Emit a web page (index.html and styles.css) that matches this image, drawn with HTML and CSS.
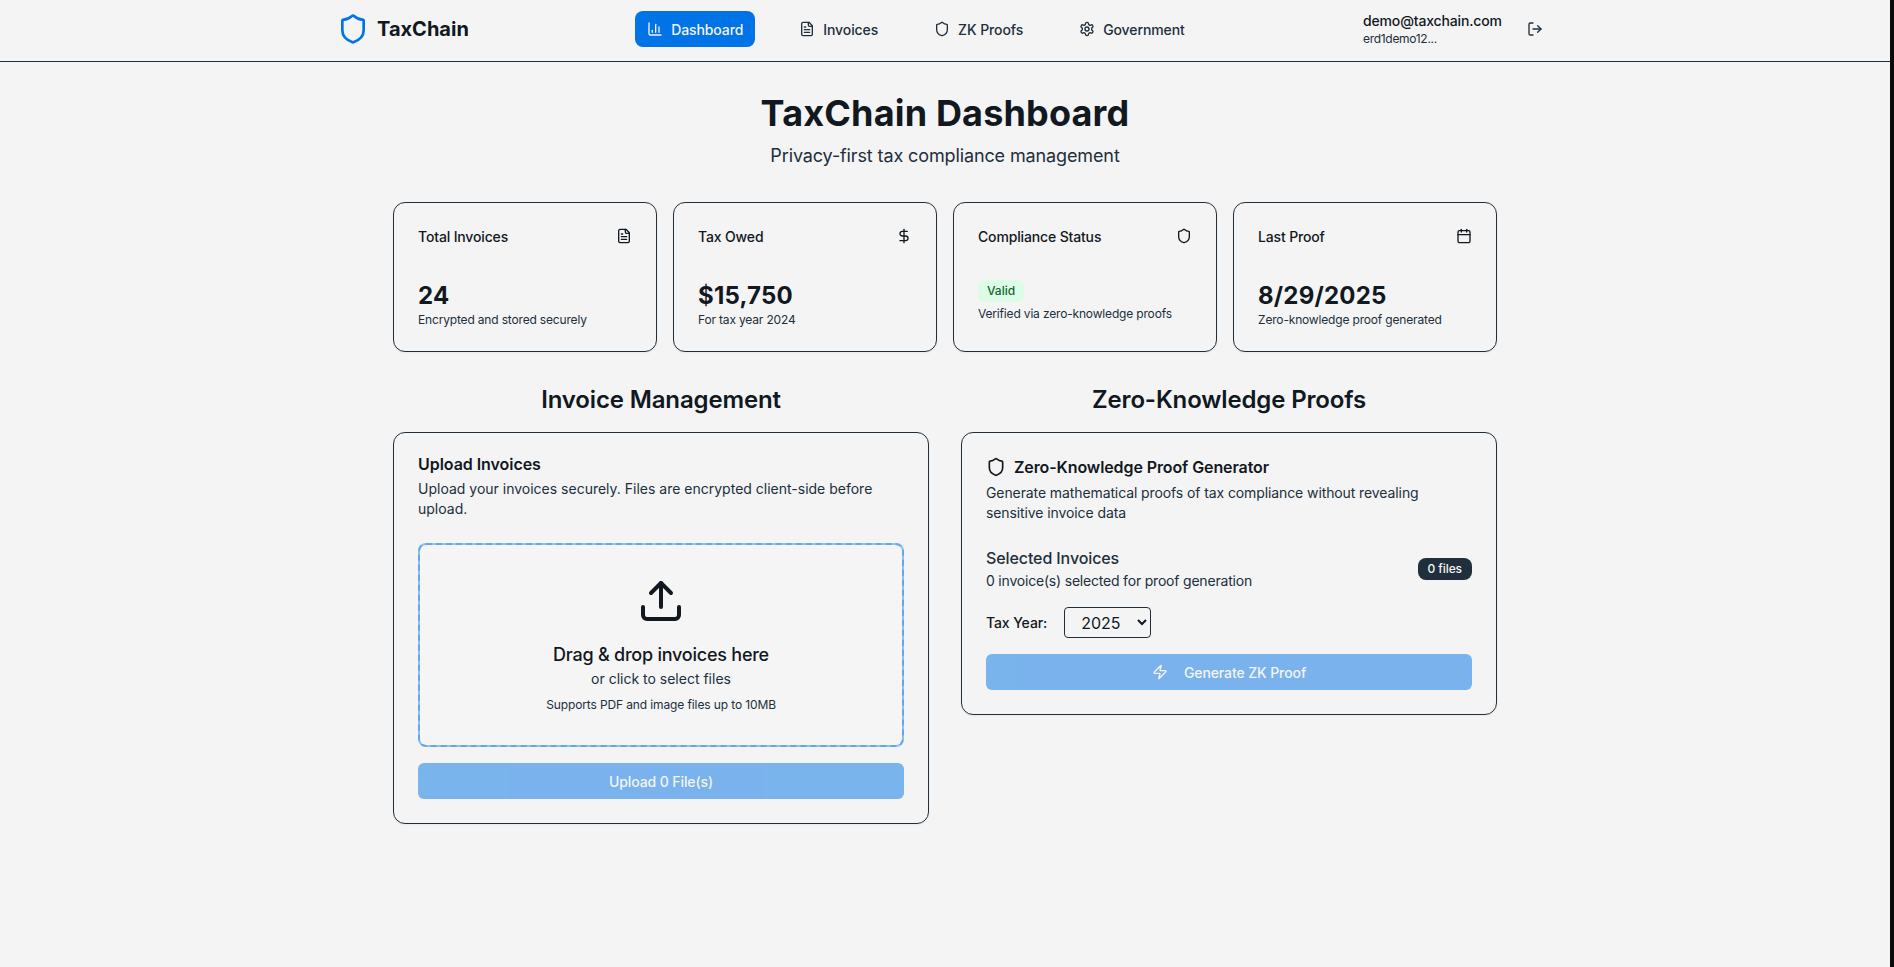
FILE: index.html
```html
<!DOCTYPE html>
<html lang="en">
<head>
  <meta charset="UTF-8">
  <meta name="viewport" content="width=device-width, initial-scale=1">
  <title>TaxChain Dashboard</title>
  <link rel="stylesheet" href="styles.css">
</head>
<body>

<div class="app">
<header class="topbar">
  <div class="topbar-inner">
    <div class="brand">
      <svg class="brand-icon" viewBox="0 0 24 24" fill="none" stroke="currentColor" stroke-width="2" stroke-linecap="round" stroke-linejoin="round"><path d="M20 13c0 5-3.5 7.5-7.66 8.95a1 1 0 0 1-.67-.01C7.5 20.5 4 18 4 13V6a1 1 0 0 1 1-1c2 0 4.5-1.2 6.24-2.72a1.17 1.17 0 0 1 1.52 0C14.51 3.81 17 5 19 5a1 1 0 0 1 1 1z"/></svg>
      <span class="brand-name">TaxChain</span>
    </div>
    <nav class="nav">
      <a class="nav-item active">
        <svg class="icon" viewBox="0 0 24 24" fill="none" stroke="currentColor" stroke-width="2" stroke-linecap="round" stroke-linejoin="round"><path d="M3 3v16a2 2 0 0 0 2 2h16"/><path d="M18 17V9"/><path d="M13 17V5"/><path d="M8 17v-3"/></svg>
        Dashboard
      </a>
      <a class="nav-item">
        <svg class="icon" viewBox="0 0 24 24" fill="none" stroke="currentColor" stroke-width="2" stroke-linecap="round" stroke-linejoin="round"><path d="M15 2H6a2 2 0 0 0-2 2v16a2 2 0 0 0 2 2h12a2 2 0 0 0 2-2V7Z"/><path d="M14 2v4a2 2 0 0 0 2 2h4"/><path d="M10 9H8"/><path d="M16 13H8"/><path d="M16 17H8"/></svg>
        Invoices
      </a>
      <a class="nav-item">
        <svg class="icon" viewBox="0 0 24 24" fill="none" stroke="currentColor" stroke-width="2" stroke-linecap="round" stroke-linejoin="round"><path d="M20 13c0 5-3.5 7.5-7.66 8.95a1 1 0 0 1-.67-.01C7.5 20.5 4 18 4 13V6a1 1 0 0 1 1-1c2 0 4.5-1.2 6.24-2.72a1.17 1.17 0 0 1 1.52 0C14.51 3.81 17 5 19 5a1 1 0 0 1 1 1z"/></svg>
        ZK Proofs
      </a>
      <a class="nav-item">
        <svg class="icon" viewBox="0 0 24 24" fill="none" stroke="currentColor" stroke-width="2" stroke-linecap="round" stroke-linejoin="round"><path d="M12.22 2h-.44a2 2 0 0 0-2 2v.18a2 2 0 0 1-1 1.73l-.43.25a2 2 0 0 1-2 0l-.15-.08a2 2 0 0 0-2.73.73l-.22.38a2 2 0 0 0 .73 2.73l.15.1a2 2 0 0 1 1 1.72v.51a2 2 0 0 1-1 1.74l-.15.09a2 2 0 0 0-.73 2.73l.22.38a2 2 0 0 0 2.73.73l.15-.08a2 2 0 0 1 2 0l.43.25a2 2 0 0 1 1 1.73V20a2 2 0 0 0 2 2h.44a2 2 0 0 0 2-2v-.18a2 2 0 0 1 1-1.73l.43-.25a2 2 0 0 1 2 0l.15.08a2 2 0 0 0 2.73-.73l.22-.39a2 2 0 0 0-.73-2.73l-.15-.08a2 2 0 0 1-1-1.74v-.5a2 2 0 0 1 1-1.74l.15-.09a2 2 0 0 0 .73-2.73l-.22-.38a2 2 0 0 0-2.73-.73l-.15.08a2 2 0 0 1-2 0l-.43-.25a2 2 0 0 1-1-1.73V4a2 2 0 0 0-2-2z"/><circle cx="12" cy="12" r="3"/></svg>
        Government
      </a>
    </nav>
    <div class="user">
      <div class="user-text">
        <div class="user-mail">demo@taxchain.com</div>
        <div class="user-addr">erd1demo12...</div>
      </div>
      <span class="logout">
        <svg class="icon" viewBox="0 0 24 24" fill="none" stroke="currentColor" stroke-width="2" stroke-linecap="round" stroke-linejoin="round"><path d="M9 21H5a2 2 0 0 1-2-2V5a2 2 0 0 1 2-2h4"/><path d="m16 17 5-5-5-5"/><path d="M21 12H9"/></svg>
      </span>
    </div>
  </div>
</header>

<main class="page">
  <div class="hero">
    <h1>TaxChain Dashboard</h1>
    <p>Privacy-first tax compliance management</p>
  </div>

  <section class="stats">
    <div class="card stat">
      <div class="stat-head">
        <span>Total Invoices</span>
        <svg class="icon" viewBox="0 0 24 24" fill="none" stroke="currentColor" stroke-width="2" stroke-linecap="round" stroke-linejoin="round"><path d="M15 2H6a2 2 0 0 0-2 2v16a2 2 0 0 0 2 2h12a2 2 0 0 0 2-2V7Z"/><path d="M14 2v4a2 2 0 0 0 2 2h4"/><path d="M10 9H8"/><path d="M16 13H8"/><path d="M16 17H8"/></svg>
      </div>
      <div class="stat-value">24</div>
      <div class="stat-note">Encrypted and stored securely</div>
    </div>
    <div class="card stat">
      <div class="stat-head">
        <span>Tax Owed</span>
        <svg class="icon" viewBox="0 0 24 24" fill="none" stroke="currentColor" stroke-width="2" stroke-linecap="round" stroke-linejoin="round"><line x1="12" x2="12" y1="2" y2="22"/><path d="M17 5H9.5a3.5 3.5 0 0 0 0 7h5a3.5 3.5 0 0 1 0 7H6"/></svg>
      </div>
      <div class="stat-value">$15,750</div>
      <div class="stat-note">For tax year 2024</div>
    </div>
    <div class="card stat">
      <div class="stat-head">
        <span>Compliance Status</span>
        <svg class="icon" viewBox="0 0 24 24" fill="none" stroke="currentColor" stroke-width="2" stroke-linecap="round" stroke-linejoin="round"><path d="M20 13c0 5-3.5 7.5-7.66 8.95a1 1 0 0 1-.67-.01C7.5 20.5 4 18 4 13V6a1 1 0 0 1 1-1c2 0 4.5-1.2 6.24-2.72a1.17 1.17 0 0 1 1.52 0C14.51 3.81 17 5 19 5a1 1 0 0 1 1 1z"/></svg>
      </div>
      <div class="stat-value badge-row"><span class="badge-valid">Valid</span></div>
      <div class="stat-note">Verified via zero-knowledge proofs</div>
    </div>
    <div class="card stat">
      <div class="stat-head">
        <span>Last Proof</span>
        <svg class="icon" viewBox="0 0 24 24" fill="none" stroke="currentColor" stroke-width="2" stroke-linecap="round" stroke-linejoin="round"><path d="M8 2v4"/><path d="M16 2v4"/><rect width="18" height="18" x="3" y="4" rx="2"/><path d="M3 10h18"/></svg>
      </div>
      <div class="stat-value">8/29/2025</div>
      <div class="stat-note">Zero-knowledge proof generated</div>
    </div>
  </section>

  <section class="columns">
    <div class="column">
      <h2>Invoice Management</h2>
      <div class="card panel">
        <h3>Upload Invoices</h3>
        <p class="panel-desc upload-desc">Upload your invoices securely. Files are encrypted client-side before upload.</p>
        <div class="dropzone">
          <svg class="upload-icon" viewBox="0 0 24 24" fill="none" stroke="currentColor" stroke-width="2" stroke-linecap="round" stroke-linejoin="round"><path d="M12 3v12"/><path d="m17 8-5-5-5 5"/><path d="M21 15v4a2 2 0 0 1-2 2H5a2 2 0 0 1-2-2v-4"/></svg>
          <div class="drop-title">Drag &amp; drop invoices here</div>
          <div class="drop-sub">or click to select files</div>
          <div class="drop-hint">Supports PDF and image files up to 10MB</div>
        </div>
        <button class="btn-primary" disabled>Upload 0 File(s)</button>
      </div>
    </div>
    <div class="column">
      <h2>Zero-Knowledge Proofs</h2>
      <div class="card panel">
        <h3 class="panel-title-icon">
          <svg class="icon-title" viewBox="0 0 24 24" fill="none" stroke="currentColor" stroke-width="2" stroke-linecap="round" stroke-linejoin="round"><path d="M20 13c0 5-3.5 7.5-7.66 8.95a1 1 0 0 1-.67-.01C7.5 20.5 4 18 4 13V6a1 1 0 0 1 1-1c2 0 4.5-1.2 6.24-2.72a1.17 1.17 0 0 1 1.52 0C14.51 3.81 17 5 19 5a1 1 0 0 1 1 1z"/></svg>
          Zero-Knowledge Proof Generator
        </h3>
        <p class="panel-desc">Generate mathematical proofs of tax compliance without revealing sensitive invoice data</p>
        <div class="selected">
          <div>
            <div class="selected-title">Selected Invoices</div>
            <div class="selected-note">0 invoice(s) selected for proof generation</div>
          </div>
          <span class="badge-files">0 files</span>
        </div>
        <div class="year-row">
          <label for="year">Tax Year:</label>
          <select id="year" class="year-select">
            <option selected>2025</option>
            <option>2024</option>
          </select>
        </div>
        <button class="btn-primary" disabled>
          <svg class="icon" viewBox="0 0 24 24" fill="none" stroke="currentColor" stroke-width="2" stroke-linecap="round" stroke-linejoin="round"><path d="M4 14a1 1 0 0 1-.78-1.63l9.9-10.2a.5.5 0 0 1 .86.46l-1.92 6.02A1 1 0 0 0 13 10h7a1 1 0 0 1 .78 1.63l-9.9 10.2a.5.5 0 0 1-.86-.46l1.92-6.02A1 1 0 0 0 11 14z"/></svg>
          Generate ZK Proof
        </button>
      </div>
    </div>
  </section>
</main>
</div>

<div class="scroll-strip"></div>

</body>
</html>
```

FILE: styles.css
```css
* { box-sizing: border-box; }
body {
  font-family: 'Inter', 'Liberation Sans', sans-serif;
  background: #f4f4f4;
  color: #11181f;
  margin: 0;
  height: 967px;
  overflow: hidden;
  display: flex;
}
.app {
  flex: 1;
  min-width: 0;
}
.scroll-strip {
  width: 4px;
  background: #0b0b0b;
}
.icon {
  width: 16px;
  height: 16px;
  flex-shrink: 0;
}

.topbar {
  height: 62px;
  padding-bottom: 3px;
  border-bottom: 1px solid #212f3c;
}
.topbar-inner {
  max-width: 1280px;
  height: 100%;
  margin: 0 auto;
  padding: 0 32px;
  display: flex;
  align-items: center;
  justify-content: space-between;
}
.brand {
  display: flex;
  align-items: center;
  gap: 8px;
}
.brand-icon {
  width: 32px;
  height: 32px;
  color: #0073e6;
}
.brand-name {
  font-size: 20px;
  font-weight: 700;
}
.nav {
  display: flex;
  gap: 32px;
}
.nav-item {
  display: flex;
  align-items: center;
  gap: 8px;
  height: 36px;
  padding: 0 12px;
  border-radius: 8px;
  font-size: 14px;
  font-weight: 500;
  letter-spacing: -0.1px;
  color: #212f3c;
}
.nav-item.active {
  background: #0073e6;
  color: #f4f4f4;
}
.user {
  display: flex;
  align-items: center;
  gap: 18px;
}
.user-text {
  width: 138px;
}
.user-mail {
  font-size: 14px;
  line-height: 20px;
  font-weight: 500;
  letter-spacing: -0.15px;
}
.user-addr {
  font-size: 12px;
  line-height: 16px;
  letter-spacing: -0.3px;
  color: #212f3c;
}
.logout {
  display: flex;
  padding: 8px;
  margin-right: 2px;
  color: #212f3c;
}

.page {
  width: 1104px;
  margin: 0 auto;
  padding-top: 31px;
}
.hero {
  text-align: center;
  margin-bottom: 32px;
}
.hero h1 {
  font-size: 36px;
  line-height: 40px;
  font-weight: 700;
  letter-spacing: 0.17px;
  margin: 0 0 9px;
}
.hero p {
  font-size: 18px;
  line-height: 28px;
  letter-spacing: -0.12px;
  margin: 0;
  color: #212f3c;
}

.card {
  border: 1px solid #212f3c;
  border-radius: 12px;
  box-shadow: 0 1px 2px rgba(0, 0, 0, 0.05);
}
.stats {
  display: grid;
  grid-template-columns: repeat(4, 1fr);
  gap: 16px;
  margin-bottom: 32px;
}
.stat {
  height: 150px;
  padding: 23px 24px;
}
.stat-head {
  display: flex;
  justify-content: space-between;
  align-items: center;
  height: 20px;
  font-size: 14px;
  font-weight: 500;
  letter-spacing: -0.15px;
}
.stat-value {
  font-size: 24px;
  line-height: 32px;
  font-weight: 700;
  letter-spacing: 0.2px;
  margin-top: 34px;
}
.stat-note {
  font-size: 12px;
  line-height: 16px;
  letter-spacing: -0.17px;
  color: #212f3c;
}
.badge-row {
  display: flex;
  align-items: center;
  letter-spacing: 0;
}
.badge-valid {
  font-size: 12px;
  line-height: 16px;
  font-weight: 500;
  padding: 3px 9px;
  margin-bottom: 4px;
  border-radius: 6px;
  background: #dcfce7;
  color: #166534;
}

.columns {
  display: grid;
  grid-template-columns: 1fr 1fr;
  gap: 32px;
  align-items: start;
}
.column h2 {
  font-size: 24px;
  line-height: 32px;
  font-weight: 600;
  letter-spacing: -0.14px;
  text-align: center;
  margin: 0 0 16px;
}
.panel {
  padding: 24px;
}
.panel h3 {
  font-size: 16px;
  line-height: 14px;
  font-weight: 600;
  letter-spacing: -0.05px;
  margin: 0 0 8px;
}
.panel h3.panel-title-icon {
  line-height: 20px;
  letter-spacing: -0.1px;
  margin-bottom: 6px;
  display: flex;
  align-items: center;
  gap: 8px;
}
.icon-title {
  width: 20px;
  height: 20px;
}
.panel-desc {
  font-size: 14px;
  line-height: 20px;
  letter-spacing: -0.1px;
  margin: 0;
  color: #212f3c;
}
.upload-desc {
  letter-spacing: 0;
}
.dropzone {
  margin-top: 24px;
  border: 2px dashed #64a6ec;
  border-radius: 8px;
  background: linear-gradient(#f5f5f5, #f5f5f5) padding-box, #90c0f2 border-box;
  display: flex;
  flex-direction: column;
  align-items: center;
  padding: 32px 0;
}
.upload-icon {
  width: 48px;
  height: 48px;
}
.drop-title {
  font-size: 18px;
  line-height: 28px;
  font-weight: 500;
  letter-spacing: -0.23px;
  margin-top: 16px;
}
.drop-sub {
  font-size: 14px;
  line-height: 20px;
  color: #212f3c;
}
.drop-hint {
  font-size: 12px;
  line-height: 16px;
  letter-spacing: -0.12px;
  margin-top: 8px;
  color: #212f3c;
}
.btn-primary {
  width: 100%;
  height: 36px;
  margin-top: 16px;
  border: none;
  border-radius: 6px;
  background: #0073e6;
  opacity: 0.5;
  color: #f4f4f4;
  font-family: inherit;
  font-size: 14px;
  font-weight: 500;
  letter-spacing: -0.1px;
  display: flex;
  align-items: center;
  justify-content: center;
  gap: 16px;
}

.selected {
  display: flex;
  align-items: center;
  justify-content: space-between;
  margin-top: 24px;
}
.selected-title {
  font-size: 16px;
  line-height: 22px;
  padding-bottom: 2px;
  font-weight: 500;
  letter-spacing: -0.1px;
  color: #212f3c;
}
.selected-note {
  font-size: 14px;
  line-height: 20px;
  letter-spacing: -0.2px;
  color: #212f3c;
}
.badge-files {
  font-size: 12px;
  line-height: 16px;
  font-weight: 500;
  letter-spacing: -0.1px;
  padding: 3px 10px;
  border-radius: 8px;
  background: #212f3c;
  color: #f4f4f4;
}
.year-row {
  display: flex;
  align-items: center;
  gap: 17px;
  margin-top: 16px;
}
.year-row label {
  font-size: 14px;
  font-weight: 500;
  letter-spacing: -0.1px;
}
.year-select {
  width: 87px;
  height: 31px;
  padding: 4px 12px;
  border: 1px solid #212f3c;
  border-radius: 4px;
  background: #f4f4f4;
  color: #11181f;
  font-family: inherit;
  font-size: 16px;
}
```
